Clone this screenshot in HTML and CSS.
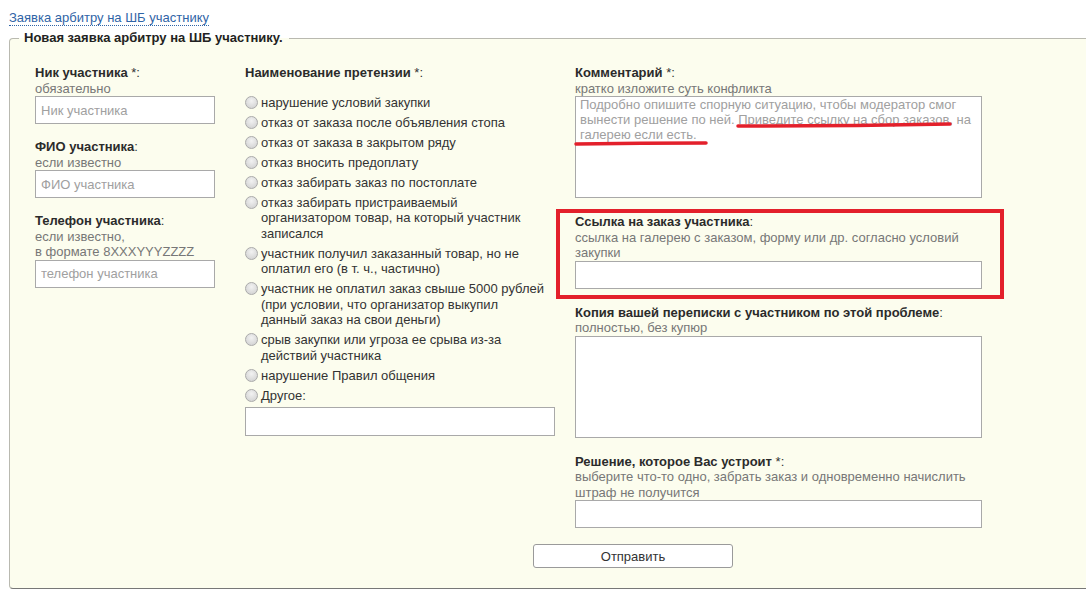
FILE: index.html
```html
<!DOCTYPE html>
<html lang="ru">
<head>
    <meta charset="UTF-8">
    <title>Заявка арбитру на ШБ участнику</title>
    <link rel="stylesheet" href="styles.css">
</head>
<body>
    <div class="page">
        <a class="crumb" href="#">Заявка арбитру на ШБ участнику</a>
        <form class="claim">
            <fieldset>
                <legend>Новая заявка арбитру на ШБ участнику.</legend>
                <div class="claim-body">
                    <div class="columns">
                        <div class="col col-user">
                            <div class="field">
                                <div class="label"><b>Ник участника</b> *:</div>
                                <div class="hint">обязательно</div>
                                <input type="text" placeholder="Ник участника">
                            </div>
                            <div class="field">
                                <div class="label"><b>ФИО участника</b>:</div>
                                <div class="hint">если известно</div>
                                <input type="text" placeholder="ФИО участника">
                            </div>
                            <div class="field">
                                <div class="label"><b>Телефон участника</b>:</div>
                                <div class="hint">если известно,<br>в формате 8XXXYYYZZZZ</div>
                                <input type="text" placeholder="телефон участника">
                            </div>
                        </div>

                        <div class="col col-reason">
                            <div class="label"><b>Наименование претензии</b> *:</div>
                            <ul class="reasons">
                                <li><input type="radio" name="reason"><span>нарушение условий закупки</span></li>
                                <li><input type="radio" name="reason"><span>отказ от заказа после объявления стопа</span></li>
                                <li><input type="radio" name="reason"><span>отказ от заказа в закрытом ряду</span></li>
                                <li><input type="radio" name="reason"><span>отказ вносить предоплату</span></li>
                                <li><input type="radio" name="reason"><span>отказ забирать заказ по постоплате</span></li>
                                <li><input type="radio" name="reason"><span>отказ забирать пристраиваемый организатором товар, на который участник записался</span></li>
                                <li><input type="radio" name="reason"><span>участник получил заказанный товар, но не оплатил его (в т. ч., частично)</span></li>
                                <li><input type="radio" name="reason"><span>участник не оплатил заказ свыше 5000 рублей (при условии, что организатор выкупил данный заказ на свои деньги)</span></li>
                                <li><input type="radio" name="reason"><span>срыв закупки или угроза ее срыва из-за действий участника</span></li>
                                <li><input type="radio" name="reason"><span>нарушение Правил общения</span></li>
                                <li><input type="radio" name="reason"><span>Другое:</span></li>
                            </ul>
                            <input type="text" class="other">
                        </div>

                        <div class="col col-details">
                            <div class="field">
                                <div class="label"><b>Комментарий</b> *:</div>
                                <div class="hint">кратко изложите суть конфликта</div>
                                <div class="comment-box">
                                    <textarea class="comment" placeholder="Подробно опишите спорную ситуацию, чтобы модератор смог&#10;вынести решение по ней. Приведите ссылку на сбор заказов, на&#10;галерею если есть."></textarea>
                                    <svg class="marks" width="406" height="102" viewBox="0 0 406 102">
                                        <path d="M163 30 Q270 30 375 28" />
                                        <path d="M1 48 Q66 47 131 47" />
                                    </svg>
                                </div>
                            </div>
                            <div class="field field-marked">
                                <div class="label"><b>Ссылка на заказ участника</b>:</div>
                                <div class="hint">ссылка на галерею с заказом, форму или др. согласно условий закупки</div>
                                <input type="text">
                            </div>
                            <div class="field">
                                <div class="label"><b>Копия вашей переписки с участником по этой проблеме</b>:</div>
                                <div class="hint">полностью, без купюр</div>
                                <textarea></textarea>
                            </div>
                            <div class="field">
                                <div class="label"><b>Решение, которое Вас устроит</b> *:</div>
                                <div class="hint">выберите что-то одно, забрать заказ и одновременно начислить штраф не получится</div>
                                <input type="text">
                            </div>
                        </div>
                    </div>
                    <div class="actions">
                        <button type="button">Отправить</button>
                    </div>
                </div>
            </fieldset>
        </form>
    </div>
</body>
</html>
```

FILE: styles.css
```css
html {
    overflow: hidden;
}
body {
    margin: 0;
    background-color: #fff;
    font-family: "Liberation Sans", Arial, sans-serif;
    font-size: 13px;
    color: #333;
}
.page {
    padding: 10px 0 0 9px;
}
.crumb {
    display: inline-block;
    color: #2f64a6;
    text-decoration: none;
    border-bottom: 1px dotted #2f64a6;
    line-height: 15px;
}
.claim {
    margin: 4px 0 0 0;
}
fieldset {
    width: 1100px;
    margin: 0;
    padding: 0;
    border: 1px solid #b9b9b0;
    border-bottom-color: #777;
    border-radius: 4px;
    background-color: #fcfdee;
}
legend {
    margin-left: 9px;
    padding: 0 6px 0 5px;
    font-weight: bold;
    line-height: 16px;
    color: #222;
}
.claim-body {
    padding: 19px 0 20px 25px;
}
.columns {
    display: flex;
    align-items: flex-start;
}
.col-user {
    width: 180px;
    margin-right: 30px;
}
.col-reason {
    width: 310px;
    margin-right: 20px;
}
.col-details {
    width: 407px;
}
.label,
.hint {
    line-height: 15.5px;
}
.label b {
    color: #2b2b2b;
}
.hint {
    color: #777;
}
.field {
    margin-bottom: 15px;
}
.col-details .field {
    margin-bottom: 16px;
}
.field-marked {
    position: relative;
}
.field-marked::after {
    content: "";
    position: absolute;
    top: -5px;
    left: -19px;
    right: -22px;
    bottom: -10px;
    border: 4px solid #e3202b;
    pointer-events: none;
}
input[type="text"],
textarea {
    display: block;
    box-sizing: border-box;
    width: 100%;
    margin: 0;
    border: 1px solid #a9a9a9;
    border-radius: 0;
    background-color: #fff;
    font-family: inherit;
    font-size: 13px;
    color: #333;
}
input[type="text"] {
    height: 28px;
    padding: 0 5px;
}
textarea {
    height: 102px;
    padding: 0 4px;
    line-height: 15px;
    resize: none;
    margin-bottom: 2px;
}
input::placeholder,
textarea::placeholder {
    color: #a0a0a0;
    opacity: 1;
}
.comment-box {
    position: relative;
}
.marks {
    position: absolute;
    top: 0;
    left: 0;
    overflow: visible;
    pointer-events: none;
}
.marks path {
    fill: none;
    stroke: #e3202b;
    stroke-width: 3.5;
    stroke-linecap: round;
}
.reasons {
    list-style: none;
    margin: 14px 8px 0 0;
    padding: 0;
}
.reasons li {
    display: flex;
    align-items: flex-start;
    line-height: 15.5px;
    margin-bottom: 4.5px;
}
.reasons input[type="radio"] {
    appearance: none;
    flex: none;
    width: 13px;
    height: 13px;
    margin: 1px 3px 0 0;
    border: 1px solid #aaa;
    border-radius: 50%;
    background: radial-gradient(circle at 50% 35%, #f2f2f2, #cdcdcd);
}
.col-reason .other {
    height: 29px;
    margin-top: -1px;
}
.actions {
    padding: 0 0 0 498px;
}
.actions button {
    width: 200px;
    height: 24px;
    padding: 0;
    border: 1px solid #9a9a9a;
    border-radius: 3px;
    background-color: #fff;
    font-family: inherit;
    font-size: 13px;
    color: #333;
}
```
